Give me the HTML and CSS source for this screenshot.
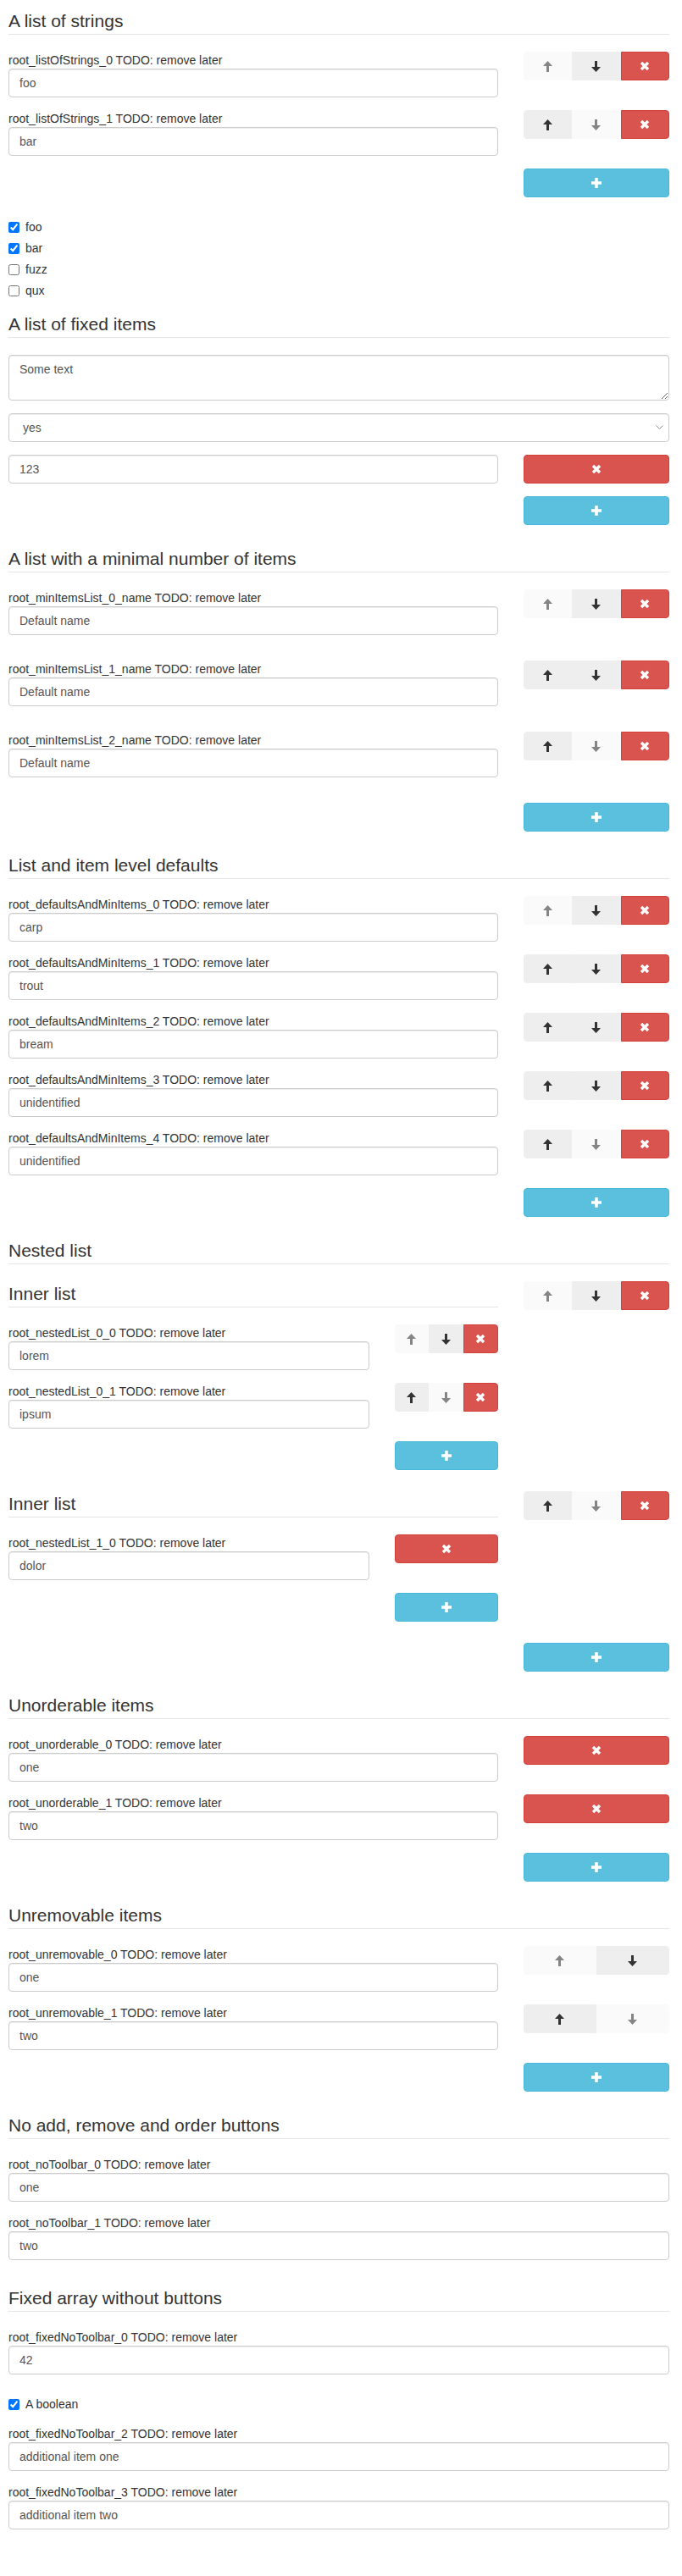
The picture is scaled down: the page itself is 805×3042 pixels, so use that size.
FILE: index.html
```html
<!DOCTYPE html>
<html lang="en">
<head>
<meta charset="utf-8">
<title>Arrays</title>
<link rel="stylesheet" href="styles.css">
</head>
<body>
<svg width="0" height="0" class="defs" aria-hidden="true">
  <defs>
    <symbol id="i-up" viewBox="0 0 11 13"><path d="M5.5 0 L11 6 L7 6 L7 13 L4 13 L4 6 L0 6 Z"/></symbol>
    <symbol id="i-down" viewBox="0 0 11 13"><path d="M5.5 13 L11 7 L7 7 L7 0 L4 0 L4 7 L0 7 Z"/></symbol>
    <symbol id="i-x" viewBox="0 0 12 12"><path d="M2 2 L10 10 M10 2 L2 10" stroke="currentColor" stroke-width="3.4" fill="none"/></symbol>
    <symbol id="i-plus" viewBox="0 0 12 12"><path d="M4.25 0 H7.75 V4.25 H12 V7.75 H7.75 V12 H4.25 V7.75 H0 V4.25 H4.25 Z"/></symbol>
  </defs>
</svg>
<div class="page">

  <!-- A list of strings -->
  <div class="field">
    <div class="legend">A list of strings</div>
    <div class="item">
      <div class="col-main">
        <label class="lbl">root_listOfStrings_0 TODO: remove later</label>
        <input class="ctl" type="text" value="foo">
      </div>
      <div class="col-tool">
        <div class="btn-group">
          <button class="btn btn-move off"><svg class="ico-arrow"><use href="#i-up"/></svg></button>
          <button class="btn btn-move"><svg class="ico-arrow"><use href="#i-down"/></svg></button>
          <button class="btn btn-del"><svg class="ico-x"><use href="#i-x"/></svg></button>
        </div>
      </div>
    </div>
    <div class="item">
      <div class="col-main">
        <label class="lbl">root_listOfStrings_1 TODO: remove later</label>
        <input class="ctl" type="text" value="bar">
      </div>
      <div class="col-tool">
        <div class="btn-group">
          <button class="btn btn-move"><svg class="ico-arrow"><use href="#i-up"/></svg></button>
          <button class="btn btn-move off"><svg class="ico-arrow"><use href="#i-down"/></svg></button>
          <button class="btn btn-del"><svg class="ico-x"><use href="#i-x"/></svg></button>
        </div>
      </div>
    </div>
    <div class="add-row"><button class="btn btn-add"><svg class="ico-plus"><use href="#i-plus"/></svg></button></div>
  </div>

  <div class="field">
    <label class="check"><input type="checkbox" checked><span>foo</span></label>
    <label class="check"><input type="checkbox" checked><span>bar</span></label>
    <label class="check"><input type="checkbox"><span>fuzz</span></label>
    <label class="check"><input type="checkbox"><span>qux</span></label>
  </div>

  <!-- A list of fixed items -->
  <div class="field">
    <div class="legend">A list of fixed items</div>
    <div class="fg"><textarea class="ctl ctl-area">Some text</textarea></div>
    <div class="fg select-wrap">
      <select class="ctl ctl-select"><option>yes</option><option>no</option></select>
      <svg class="chev" viewBox="0 0 9 5"><path d="M0.5 0.5 L4.5 4.5 L8.5 0.5" fill="none" stroke="#8a8a8a" stroke-width="1"/></svg>
    </div>
    <div class="item">
      <div class="col-main">
        <input class="ctl" type="text" value="123">
      </div>
      <div class="col-tool">
        <button class="btn btn-del solo"><svg class="ico-x"><use href="#i-x"/></svg></button>
      </div>
    </div>
    <div class="add-row"><button class="btn btn-add"><svg class="ico-plus"><use href="#i-plus"/></svg></button></div>
  </div>

  <!-- A list with a minimal number of items -->
  <div class="field">
    <div class="legend">A list with a minimal number of items</div>
    <div class="item item-obj">
      <div class="col-main">
        <label class="lbl">root_minItemsList_0_name TODO: remove later</label>
        <input class="ctl" type="text" value="Default name">
      </div>
      <div class="col-tool">
        <div class="btn-group">
          <button class="btn btn-move off"><svg class="ico-arrow"><use href="#i-up"/></svg></button>
          <button class="btn btn-move"><svg class="ico-arrow"><use href="#i-down"/></svg></button>
          <button class="btn btn-del"><svg class="ico-x"><use href="#i-x"/></svg></button>
        </div>
      </div>
    </div>
    <div class="item item-obj">
      <div class="col-main">
        <label class="lbl">root_minItemsList_1_name TODO: remove later</label>
        <input class="ctl" type="text" value="Default name">
      </div>
      <div class="col-tool">
        <div class="btn-group">
          <button class="btn btn-move"><svg class="ico-arrow"><use href="#i-up"/></svg></button>
          <button class="btn btn-move"><svg class="ico-arrow"><use href="#i-down"/></svg></button>
          <button class="btn btn-del"><svg class="ico-x"><use href="#i-x"/></svg></button>
        </div>
      </div>
    </div>
    <div class="item item-obj">
      <div class="col-main">
        <label class="lbl">root_minItemsList_2_name TODO: remove later</label>
        <input class="ctl" type="text" value="Default name">
      </div>
      <div class="col-tool">
        <div class="btn-group">
          <button class="btn btn-move"><svg class="ico-arrow"><use href="#i-up"/></svg></button>
          <button class="btn btn-move off"><svg class="ico-arrow"><use href="#i-down"/></svg></button>
          <button class="btn btn-del"><svg class="ico-x"><use href="#i-x"/></svg></button>
        </div>
      </div>
    </div>
    <div class="add-row"><button class="btn btn-add"><svg class="ico-plus"><use href="#i-plus"/></svg></button></div>
  </div>

  <!-- List and item level defaults -->
  <div class="field">
    <div class="legend">List and item level defaults</div>
    <div class="item">
      <div class="col-main">
        <label class="lbl">root_defaultsAndMinItems_0 TODO: remove later</label>
        <input class="ctl" type="text" value="carp">
      </div>
      <div class="col-tool">
        <div class="btn-group">
          <button class="btn btn-move off"><svg class="ico-arrow"><use href="#i-up"/></svg></button>
          <button class="btn btn-move"><svg class="ico-arrow"><use href="#i-down"/></svg></button>
          <button class="btn btn-del"><svg class="ico-x"><use href="#i-x"/></svg></button>
        </div>
      </div>
    </div>
    <div class="item">
      <div class="col-main">
        <label class="lbl">root_defaultsAndMinItems_1 TODO: remove later</label>
        <input class="ctl" type="text" value="trout">
      </div>
      <div class="col-tool">
        <div class="btn-group">
          <button class="btn btn-move"><svg class="ico-arrow"><use href="#i-up"/></svg></button>
          <button class="btn btn-move"><svg class="ico-arrow"><use href="#i-down"/></svg></button>
          <button class="btn btn-del"><svg class="ico-x"><use href="#i-x"/></svg></button>
        </div>
      </div>
    </div>
    <div class="item">
      <div class="col-main">
        <label class="lbl">root_defaultsAndMinItems_2 TODO: remove later</label>
        <input class="ctl" type="text" value="bream">
      </div>
      <div class="col-tool">
        <div class="btn-group">
          <button class="btn btn-move"><svg class="ico-arrow"><use href="#i-up"/></svg></button>
          <button class="btn btn-move"><svg class="ico-arrow"><use href="#i-down"/></svg></button>
          <button class="btn btn-del"><svg class="ico-x"><use href="#i-x"/></svg></button>
        </div>
      </div>
    </div>
    <div class="item">
      <div class="col-main">
        <label class="lbl">root_defaultsAndMinItems_3 TODO: remove later</label>
        <input class="ctl" type="text" value="unidentified">
      </div>
      <div class="col-tool">
        <div class="btn-group">
          <button class="btn btn-move"><svg class="ico-arrow"><use href="#i-up"/></svg></button>
          <button class="btn btn-move"><svg class="ico-arrow"><use href="#i-down"/></svg></button>
          <button class="btn btn-del"><svg class="ico-x"><use href="#i-x"/></svg></button>
        </div>
      </div>
    </div>
    <div class="item">
      <div class="col-main">
        <label class="lbl">root_defaultsAndMinItems_4 TODO: remove later</label>
        <input class="ctl" type="text" value="unidentified">
      </div>
      <div class="col-tool">
        <div class="btn-group">
          <button class="btn btn-move"><svg class="ico-arrow"><use href="#i-up"/></svg></button>
          <button class="btn btn-move off"><svg class="ico-arrow"><use href="#i-down"/></svg></button>
          <button class="btn btn-del"><svg class="ico-x"><use href="#i-x"/></svg></button>
        </div>
      </div>
    </div>
    <div class="add-row"><button class="btn btn-add"><svg class="ico-plus"><use href="#i-plus"/></svg></button></div>
  </div>

  <!-- Nested list -->
  <div class="field">
    <div class="legend">Nested list</div>
    <div class="item item-nested">
      <div class="col-main">
        <div class="field">
          <div class="legend">Inner list</div>
          <div class="item">
            <div class="col-main">
              <label class="lbl">root_nestedList_0_0 TODO: remove later</label>
              <input class="ctl" type="text" value="lorem">
            </div>
            <div class="col-tool">
              <div class="btn-group">
                <button class="btn btn-move off"><svg class="ico-arrow"><use href="#i-up"/></svg></button>
                <button class="btn btn-move"><svg class="ico-arrow"><use href="#i-down"/></svg></button>
                <button class="btn btn-del"><svg class="ico-x"><use href="#i-x"/></svg></button>
              </div>
            </div>
          </div>
          <div class="item">
            <div class="col-main">
              <label class="lbl">root_nestedList_0_1 TODO: remove later</label>
              <input class="ctl" type="text" value="ipsum">
            </div>
            <div class="col-tool">
              <div class="btn-group">
                <button class="btn btn-move"><svg class="ico-arrow"><use href="#i-up"/></svg></button>
                <button class="btn btn-move off"><svg class="ico-arrow"><use href="#i-down"/></svg></button>
                <button class="btn btn-del"><svg class="ico-x"><use href="#i-x"/></svg></button>
              </div>
            </div>
          </div>
          <div class="add-row"><button class="btn btn-add"><svg class="ico-plus"><use href="#i-plus"/></svg></button></div>
        </div>
      </div>
      <div class="col-tool">
        <div class="btn-group">
          <button class="btn btn-move off"><svg class="ico-arrow"><use href="#i-up"/></svg></button>
          <button class="btn btn-move"><svg class="ico-arrow"><use href="#i-down"/></svg></button>
          <button class="btn btn-del"><svg class="ico-x"><use href="#i-x"/></svg></button>
        </div>
      </div>
    </div>
    <div class="item item-nested">
      <div class="col-main">
        <div class="field">
          <div class="legend">Inner list</div>
          <div class="item">
            <div class="col-main">
              <label class="lbl">root_nestedList_1_0 TODO: remove later</label>
              <input class="ctl" type="text" value="dolor">
            </div>
            <div class="col-tool">
              <button class="btn btn-del solo"><svg class="ico-x"><use href="#i-x"/></svg></button>
            </div>
          </div>
          <div class="add-row"><button class="btn btn-add"><svg class="ico-plus"><use href="#i-plus"/></svg></button></div>
        </div>
      </div>
      <div class="col-tool">
        <div class="btn-group">
          <button class="btn btn-move"><svg class="ico-arrow"><use href="#i-up"/></svg></button>
          <button class="btn btn-move off"><svg class="ico-arrow"><use href="#i-down"/></svg></button>
          <button class="btn btn-del"><svg class="ico-x"><use href="#i-x"/></svg></button>
        </div>
      </div>
    </div>
    <div class="add-row"><button class="btn btn-add"><svg class="ico-plus"><use href="#i-plus"/></svg></button></div>
  </div>

  <!-- Unorderable items -->
  <div class="field">
    <div class="legend">Unorderable items</div>
    <div class="item">
      <div class="col-main">
        <label class="lbl">root_unorderable_0 TODO: remove later</label>
        <input class="ctl" type="text" value="one">
      </div>
      <div class="col-tool">
        <button class="btn btn-del solo"><svg class="ico-x"><use href="#i-x"/></svg></button>
      </div>
    </div>
    <div class="item">
      <div class="col-main">
        <label class="lbl">root_unorderable_1 TODO: remove later</label>
        <input class="ctl" type="text" value="two">
      </div>
      <div class="col-tool">
        <button class="btn btn-del solo"><svg class="ico-x"><use href="#i-x"/></svg></button>
      </div>
    </div>
    <div class="add-row"><button class="btn btn-add"><svg class="ico-plus"><use href="#i-plus"/></svg></button></div>
  </div>

  <!-- Unremovable items -->
  <div class="field">
    <div class="legend">Unremovable items</div>
    <div class="item">
      <div class="col-main">
        <label class="lbl">root_unremovable_0 TODO: remove later</label>
        <input class="ctl" type="text" value="one">
      </div>
      <div class="col-tool">
        <div class="btn-group">
          <button class="btn btn-move off"><svg class="ico-arrow"><use href="#i-up"/></svg></button>
          <button class="btn btn-move"><svg class="ico-arrow"><use href="#i-down"/></svg></button>
        </div>
      </div>
    </div>
    <div class="item">
      <div class="col-main">
        <label class="lbl">root_unremovable_1 TODO: remove later</label>
        <input class="ctl" type="text" value="two">
      </div>
      <div class="col-tool">
        <div class="btn-group">
          <button class="btn btn-move"><svg class="ico-arrow"><use href="#i-up"/></svg></button>
          <button class="btn btn-move off"><svg class="ico-arrow"><use href="#i-down"/></svg></button>
        </div>
      </div>
    </div>
    <div class="add-row"><button class="btn btn-add"><svg class="ico-plus"><use href="#i-plus"/></svg></button></div>
  </div>

  <!-- No add, remove and order buttons -->
  <div class="field">
    <div class="legend">No add, remove and order buttons</div>
    <div class="item">
      <div class="col-full">
        <label class="lbl">root_noToolbar_0 TODO: remove later</label>
        <input class="ctl" type="text" value="one">
      </div>
    </div>
    <div class="item">
      <div class="col-full">
        <label class="lbl">root_noToolbar_1 TODO: remove later</label>
        <input class="ctl" type="text" value="two">
      </div>
    </div>
  </div>

  <!-- Fixed array without buttons -->
  <div class="field">
    <div class="legend">Fixed array without buttons</div>
    <div class="item">
      <div class="col-full">
        <label class="lbl">root_fixedNoToolbar_0 TODO: remove later</label>
        <input class="ctl" type="text" value="42">
      </div>
    </div>
    <div class="bool">
      <label class="check"><input type="checkbox" checked><span>A boolean</span></label>
    </div>
    <div class="item">
      <div class="col-full">
        <label class="lbl">root_fixedNoToolbar_2 TODO: remove later</label>
        <input class="ctl" type="text" value="additional item one">
      </div>
    </div>
    <div class="item">
      <div class="col-full">
        <label class="lbl">root_fixedNoToolbar_3 TODO: remove later</label>
        <input class="ctl" type="text" value="additional item two">
      </div>
    </div>
  </div>

</div>
</body>
</html>
```

FILE: styles.css
```css
* {
  box-sizing: border-box;
}

html,
body {
  margin: 0;
  padding: 0;
  background: #fff;
}

body {
  font-family: "Liberation Sans", Arial, Helvetica, sans-serif;
  font-size: 14px;
  line-height: 20px;
  color: #333;
}

.defs {
  position: absolute;
  width: 0;
  height: 0;
  overflow: hidden;
}

.page {
  padding: 10px 15px 0 10px;
}

.field {
  display: flow-root;
  margin-bottom: 15px;
}

.legend {
  display: block;
  margin: 0 0 20px;
  padding: 0;
  font-size: 21px;
  line-height: 30px;
  font-weight: normal;
  color: #333;
  border-bottom: 1px solid #e5e5e5;
}

.lbl {
  display: block;
  margin: 0;
  font-weight: normal;
  line-height: 20px;
}

.ctl {
  display: block;
  width: 100%;
  height: 34px;
  padding: 6px 12px;
  font-family: inherit;
  font-size: 14px;
  line-height: 20px;
  color: #555;
  background: #fff;
  border: 1px solid #ccc;
  border-radius: 4px;
  box-shadow: inset 0 1px 1px rgba(0, 0, 0, 0.075);
  margin: 0;
  outline: none;
}

.ctl-area {
  height: 54px;
  resize: vertical;
}

.ctl-select {
  -webkit-appearance: none;
  appearance: none;
  padding-left: 16px;
}

.fg {
  margin-bottom: 15px;
}

.select-wrap {
  position: relative;
}

.chev {
  position: absolute;
  right: 7px;
  top: 14px;
  width: 9px;
  height: 5px;
}

/* grid rows */
.item {
  display: flex;
  margin: 0 -15px 15px;
}

.item-obj {
  margin-bottom: 30px;
}

.item-nested {
  margin-bottom: 0;
}

.col-main {
  flex: 0 0 75%;
  min-width: 0;
  padding: 0 15px;
}

.col-tool {
  flex: 0 0 25%;
  min-width: 0;
  padding: 0 15px;
}

.col-full {
  flex: 0 0 100%;
  min-width: 0;
  padding: 0 15px;
}

/* buttons */
.btn {
  display: flex;
  align-items: center;
  justify-content: center;
  height: 34px;
  padding: 0;
  margin: 0;
  border: 1px solid transparent;
  font: inherit;
  cursor: pointer;
}

.btn-group {
  display: flex;
}

.btn-group .btn {
  flex: 1 1 0;
  border-radius: 0;
}

.btn-group .btn:first-child {
  border-radius: 4px 0 0 4px;
}

.btn-group .btn:last-child {
  border-radius: 0 4px 4px 0;
}

.btn-move {
  background: #eeeeee;
  border-color: #eeeeee;
  color: #333;
}

.btn-move.off {
  background: #fafafa;
  border-color: #fafafa;
  color: #858585;
}

.btn-del {
  background: #d9534f;
  border-color: #d43f3a;
  color: #fff;
}

.btn-del.solo {
  width: 100%;
  border-radius: 4px;
}

.add-row {
  display: flex;
  justify-content: flex-end;
  margin-bottom: 10px;
}

.btn-add {
  width: calc(25% - 22.5px);
  background: #5bc0de;
  border-color: #46b8da;
  border-radius: 4px;
  color: #fff;
}

.col-main .add-row .btn-add {
  width: calc(25% - 22.5px);
}

.ico-arrow {
  width: 11px;
  height: 13px;
  fill: currentColor;
}

.ico-x {
  width: 12px;
  height: 12px;
  color: #fff;
}

.ico-plus {
  width: 12px;
  height: 12px;
  fill: #fff;
}

/* checkboxes */
.check {
  display: flex;
  align-items: flex-start;
  line-height: 20px;
  margin: 0 0 5px;
  font-weight: normal;
}

.check:last-child {
  margin-bottom: 0;
}

.check input {
  width: 13px;
  height: 13px;
  margin: 4px 7px 0 0;
  flex: 0 0 13px;
}

.bool {
  padding-top: 10px;
  margin-bottom: 15px;
}
```
